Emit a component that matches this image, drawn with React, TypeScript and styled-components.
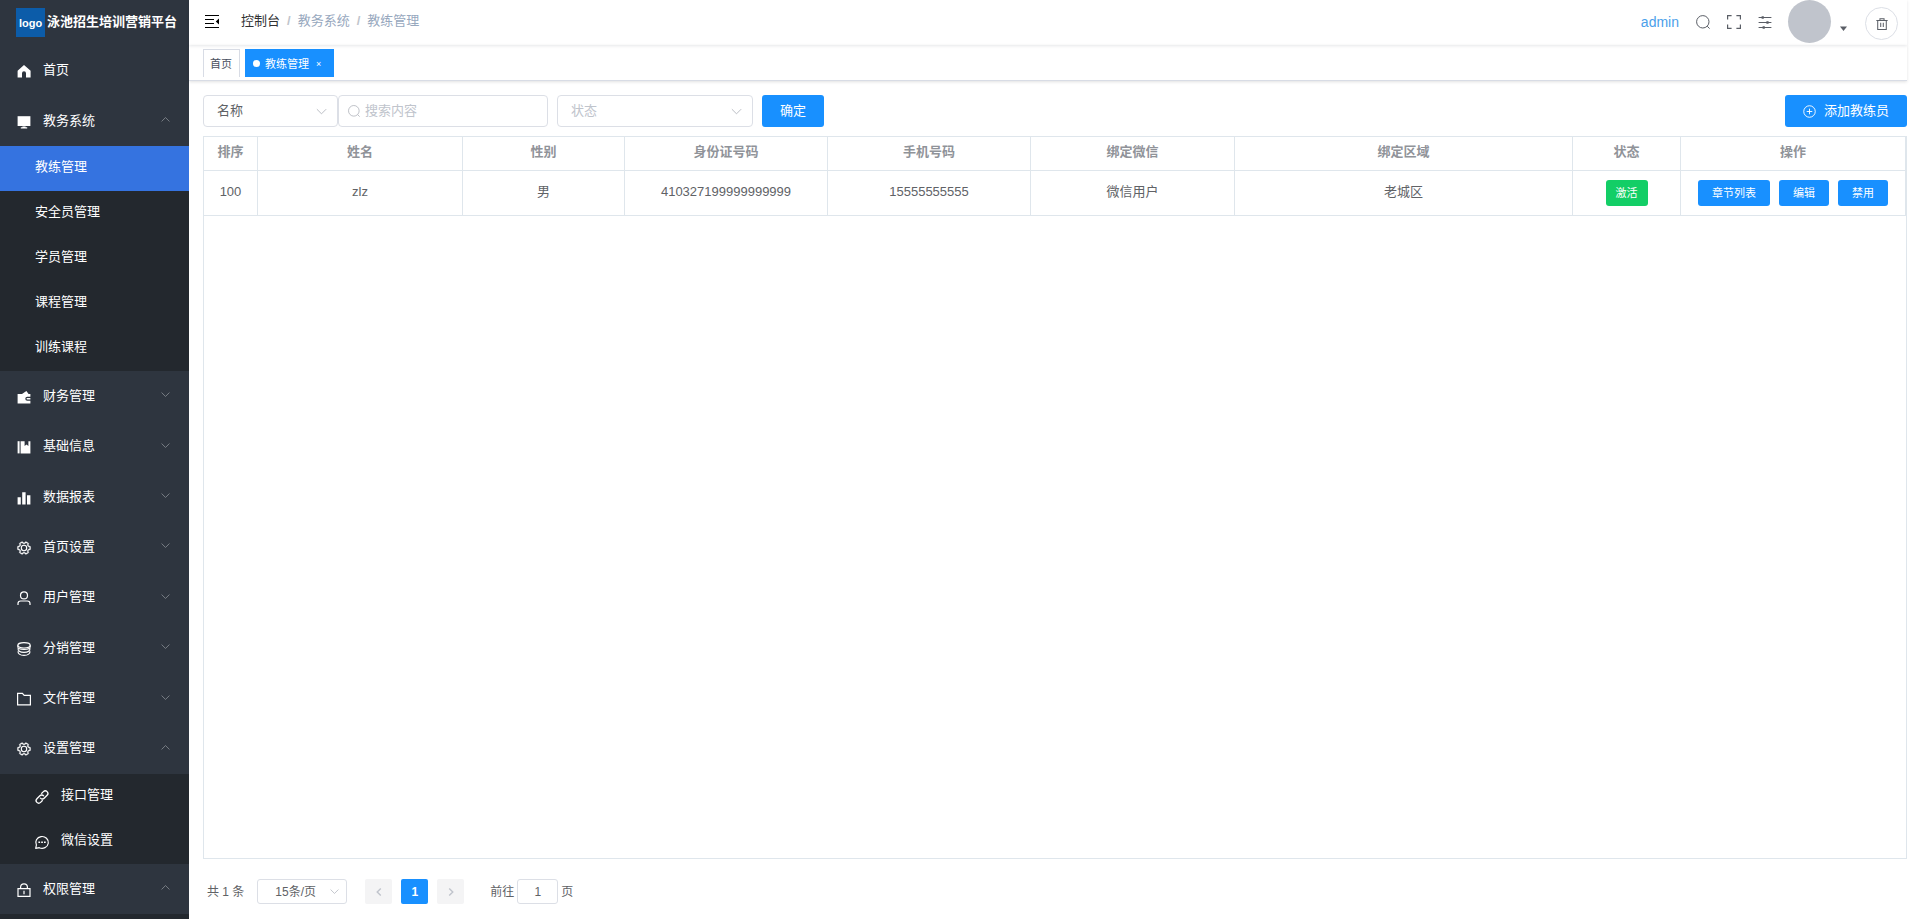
import React from "react";
import styled, { createGlobalStyle, css } from "styled-components";

const GlobalStyle = createGlobalStyle`
  *, *::before, *::after { box-sizing: border-box; }
  body {
    margin: 0;
    background: #fff;
    color: #606266;
    font-family: "Liberation Sans", "Noto Sans CJK SC", sans-serif;
    font-size: 13px;
    line-height: 20px;
  }
  button, input, select { font: inherit; color: inherit; margin: 0; }
  button { cursor: pointer; }
  a { color: inherit; text-decoration: none; }
  ul, ol { list-style: none; margin: 0; padding: 0; }
`;

/* ---------- icons ---------- */

const Svg = styled.svg<{ $size: number }>`
  display: block;
  flex: none;
  width: ${(p) => p.$size}px;
  height: ${(p) => p.$size}px;
  fill: none;
  stroke: currentColor;
  stroke-width: 1;
`;

const shapes = {
  home: <path fill="currentColor" stroke="none" d="M7 1 13.6 6.8V13.4H9V9.2a2 2 0 0 0-4 0v4.2H.6V6.8z" />,
  platform: (
    <g fill="currentColor" stroke="none">
      <path d="M.6 1.200h12.800v9.800H.6z" />
      <path d="M5.400 11.600h3.200v.6h1.600v1.200H3.800v-1.200h1.600z" />
    </g>
  ),
  wallet: (
    <path
      fill="currentColor"
      stroke="none"
      fillRule="evenodd"
      d="M.6 4h4.400l4.400-3 2.200 3h1.800v2.800H10.300a2 2 0 0 0 0 4h3.100v2.600H.6zM10.300 8h3.100v1.600h-3.100a.8.8 0 0 1 0-1.600z"
    />
  ),
  book: (
    <g fill="currentColor" stroke="none">
      <path d="M.6 1.200h2v12.200h-2z" />
      <path d="M3.600 1.200h4v4.800l1.900-1.400 1.900 1.400V1.200h2v12.200H3.600z" />
    </g>
  ),
  bars: (
    <path fill="currentColor" stroke="none" d="M.6 6.200h3.200v7.200H.6zM5.200 1.200h3.400v12.200H5.200zM10 4.200h3.400v9.200H10z" />
  ),
  gear: (
    <g>
      <g transform="translate(-.5 -.5) scale(.01465) rotate(30 512 512)" fill="currentColor" stroke="currentColor" strokeWidth="20">
        <path d="M600.704 64a32 32 0 0 1 30.464 22.208l35.200 109.376c14.784 7.232 28.928 15.360 42.432 24.512l112.384-24.192a32 32 0 0 1 34.432 15.360L944.320 364.800a32 32 0 0 1-4.032 37.504l-77.120 85.120a357.120 357.120 0 0 1 0 49.024l77.120 85.248a32 32 0 0 1 4.032 37.504l-88.704 153.600a32 32 0 0 1-34.432 15.296L708.800 803.904c-13.440 9.088-27.648 17.280-42.368 24.512l-35.264 109.376A32 32 0 0 1 600.704 960H423.296a32 32 0 0 1-30.464-22.208L357.696 828.480a351.616 351.616 0 0 1-42.560-24.640l-112.320 24.256a32 32 0 0 1-34.432-15.360L79.680 659.200a32 32 0 0 1 4.032-37.504l77.120-85.248a357.120 357.120 0 0 1 0-48.896l-77.120-85.248A32 32 0 0 1 79.680 364.800l88.704-153.600a32 32 0 0 1 34.432-15.296l112.320 24.256c13.568-9.152 27.776-17.408 42.560-24.640l35.200-109.312A32 32 0 0 1 423.232 64H600.640zm-23.424 64H446.720l-36.352 113.088-24.512 11.968a294.113 294.113 0 0 0-34.816 20.096l-22.656 15.360-116.224-25.088-65.280 113.152 79.680 88.192-1.920 27.136a293.120 293.120 0 0 0 0 40.192l1.920 27.136-79.808 88.192 65.344 113.152 116.224-25.024 22.656 15.296a294.113 294.113 0 0 0 34.816 20.096l24.512 11.968L446.720 896h130.688l36.480-113.152 24.448-11.904a288.282 288.282 0 0 0 34.752-20.096l22.592-15.296 116.288 25.024 65.280-113.152-79.744-88.192 1.920-27.136a293.120 293.120 0 0 0 0-40.256l-1.920-27.136 79.808-88.128-65.344-113.152-116.288 24.960-22.592-15.232a287.616 287.616 0 0 0-34.752-20.096l-24.448-11.904L577.344 128z" />
      </g>
      <circle cx="7" cy="7" r="2.700" strokeWidth="1.100" />
    </g>
  ),
  user: (
    <g strokeWidth="1.200">
      <circle cx="7" cy="4.400" r="3.500" />
      <path d="M1 14v-1.400a2.600 2.600 0 0 1 2.600-2.600h6.800a2.600 2.600 0 0 1 2.600 2.600V14" />
    </g>
  ),
  coin: (
    <g strokeWidth="1.100">
      <ellipse cx="7" cy="3.300" rx="6.200" ry="2.700" />
      <path d="M.8 3.300v1.400c0 1.500 2.800 2.700 6.200 2.700s6.200-1.200 6.200-2.700V3.300" />
      <path d="M1.200 6.200c-.8 2.400 1.800 4.200 5.800 4.200s6.600-1.800 5.800-4.200" />
      <path d="M1.200 9c-.8 2.400 1.800 4.400 5.800 4.400s6.600-2 5.800-4.400" />
    </g>
  ),
  folder: <path strokeWidth="1.200" d="M.6 1.400h4.800l1.800 2h6.200v9.400H.6z" />,
  link: (
    <g strokeWidth="1.300" transform="rotate(-45 7 7)">
      <path d="M5.200 9.800H2.200a2.600 2.600 0 0 1 0-5.200h4.200a2.600 2.600 0 0 1 2.500 3.200" />
      <path d="M8.800 4.200h3a2.600 2.600 0 0 1 0 5.200H7.600a2.600 2.600 0 0 1-2.500-3.200" />
    </g>
  ),
  chat: (
    <g>
      <path strokeWidth="1.200" d="M.7 13.400 1.400 10A6.300 5.900 0 1 1 4.300 12.700z" strokeLinejoin="round" />
      <path fill="currentColor" stroke="none" d="M3.400 6.500h1.700v1.500H3.400zM6.200 6.500h1.700v1.500H6.200zM9 6.500h1.700v1.500H9z" />
    </g>
  ),
  lock: (
    <g strokeWidth="1.200">
      <path d="M1 5.600h12v7.800H1zM3.600 5.600V4.200a3.400 3.400 0 0 1 6.800 0v1.400M7 7.800v3.400" />
    </g>
  ),
  up: <path d="M2 9.500 7 4.500l5 5" />,
  down: <path d="m2 4.500 5 5 5-5" />,
  left: <path strokeWidth="2" d="M9.500 2 4.500 7l5 5" />,
  right: <path strokeWidth="2" d="m4.500 2 5 5-5 5" />,
  search: (
    <g>
      <circle cx="6.800" cy="6.800" r="6.200" />
      <path d="m11.200 11.200 2.400 2.400" />
    </g>
  ),
  fullscreen: <path strokeWidth="1.200" d="M.6 4.600V.6h4M9.400.6h4v4M13.400 9.400v4h-4M4.600 13.400h-4v-4" />,
  sliders: (
    <g>
      <path d="M.6 2.500h12.800M.6 7.500h12.800M.6 12.500h12.800" />
      <path strokeWidth="2.600" d="M3.600 2.500h2.200M8.400 7.500h2.200M4.600 12.500h2.200" />
    </g>
  ),
  fold: (
    <g>
      <path d="M0 .5h14M0 4.500h9M0 8.500h9M0 12.500h14" />
      <path fill="currentColor" stroke="none" d="M14 3.500v6L10.800 6.500z" />
    </g>
  ),
  caret: <path fill="currentColor" stroke="none" d="M0 3h14L7 12z" />,
  trash: <path strokeWidth="1.200" d="M.4 3h13.200M4.600 3V1h4.800v2M2 3v10.400h10V3M5.500 5.600v5M8.500 5.600v5" />,
  plus: (
    <g>
      <circle cx="7" cy="7" r="6.200" />
      <path d="M7 4v6M4 7h6" />
    </g>
  ),
};

type IconName = keyof typeof shapes;

const Icon = ({ name, size = 14 }: { name: IconName; size?: number }) => (
  <Svg viewBox="0 0 14 14" $size={size} aria-hidden="true" overflow="visible">
    {shapes[name]}
  </Svg>
);

/* ---------- shell ---------- */

const Shell = styled.div`
  display: flex;
  min-height: 100vh;
`;

const Sidebar = styled.aside`
  display: flex;
  flex-direction: column;
  flex: none;
  width: 189px;
  height: 100vh;
  overflow: hidden;
  background: #2e353f;
  color: #fff;
`;

const Brand = styled.a`
  display: flex;
  flex: none;
  align-items: center;
  gap: 2px;
  height: 45px;
  padding-left: 16px;
  font-weight: bold;
  white-space: nowrap;
`;

const Logo = styled.span`
  display: grid;
  place-items: center;
  width: 29px;
  height: 29px;
  background: #0c5ca9;
  font-size: 11px;
`;

const Label = styled.span`
  flex: 1;
  padding-bottom: 2px;
`;

const SubLabel = styled(Label)`
  padding-bottom: 4px;
`;

const Menu = styled.nav`
  display: flex;
  flex: 1;
  flex-direction: column;
  min-height: 0;
`;

const MenuRow = styled.button`
  display: flex;
  flex: 1 0 50px;
  align-items: center;
  gap: 12px;
  max-height: 51px;
  padding: 2px 18px 0 17px;
  border: 0;
  background: none;
  text-align: left;
`;

const Arrow = styled.span`
  padding-bottom: 4px;
  color: #8b9097;
`;

const SubMenu = styled.ul`
  flex: none;
  background: #23282e;
`;

const SubLink = styled.a<{ $active?: boolean }>`
  display: flex;
  align-items: center;
  gap: 12px;
  height: 45px;
  padding: 2px 35px 0;
  background: ${(p) => (p.$active ? "#3573e0" : "transparent")};
`;

const ClosedEnd = styled.div`
  flex: none;
  height: 5px;
  background: #23282e;
`;

const Main = styled.main`
  display: flex;
  flex: 1;
  flex-direction: column;
  min-width: 0;
  height: 100vh;
  padding-right: 13px;
`;

const TopBar = styled.header`
  display: flex;
  flex: none;
  align-items: center;
  justify-content: space-between;
  height: 45px;
  padding: 0 9px 2px 16px;
  box-shadow: 0 1px 3px rgba(0, 21, 41, 0.1);
`;

const Group = styled.div<{ $gap: number }>`
  display: flex;
  align-items: center;
  gap: ${(p) => p.$gap}px;
`;

const IconButton = styled.button`
  display: grid;
  place-items: center;
  padding: 0;
  border: 0;
  background: none;
  color: #5a5e66;
`;

const FoldButton = styled(IconButton)`
  color: #000;
`;

const Crumbs = styled.ol`
  display: flex;
  padding-bottom: 2px;
  color: #97a8be;
`;

const Crumb = styled.li`
  & + &::before {
    content: "/";
    margin: 0 7px;
    color: #c0c4cc;
    font-weight: bold;
  }
  &:first-child { color: #303133; }
`;

const UserName = styled.a`
  color: #4ba0ea;
  font-size: 14px;
`;

const AvatarButton = styled.button`
  display: flex;
  align-items: center;
  gap: 9px;
  padding: 0;
  border: 0;
  background: none;
  color: #5a5e66;
`;

const Avatar = styled.span`
  width: 43px;
  height: 43px;
  border-radius: 50%;
  background: #c0c4cc;
`;

const CaretBox = styled.span`
  padding-top: 14px;
`;

const RoundButton = styled(IconButton)`
  width: 33px;
  height: 33px;
  border: 1px solid #dcdfe6;
  border-radius: 50%;
`;

const RoundSlot = styled.div`
  padding: 4px 0 0 2px;
`;

const UserTools = styled.div`
  display: flex;
  align-items: center;
  gap: 16px;
  height: 43px;
`;

const TagBar = styled.div`
  display: flex;
  flex: none;
  gap: 5px;
  height: 36px;
  padding: 4px 14px 3px;
  border-bottom: 1px solid #d8dce5;
  box-shadow: 0 1px 3px rgba(0, 0, 0, 0.12);
`;

const Tag = styled.a<{ $active?: boolean }>`
  display: flex;
  align-items: center;
  gap: 5px;
  padding: 0 7px 0 6px;
  border: 1px solid #d8dce5;
  border-bottom: 0;
  color: #495060;
  font-size: 11px;
  ${(p) =>
    p.$active &&
    css`
      padding: 0 12px 0 7px;
      border-color: #1890ff;
      background: #1890ff;
      color: #fff;
    `}
`;

const Dot = styled.span`
  width: 7px;
  height: 7px;
  border-radius: 50%;
  background: #fff;
`;

const Close = styled.span`
  padding-left: 2px;
  font-size: 9px;
`;

/* ---------- page ---------- */

const Page = styled.section`
  display: flex;
  flex: 1;
  flex-direction: column;
  min-height: 0;
  padding: 14px 0 15px 14px;
`;

const Filters = styled.form`
  display: flex;
  margin-bottom: 9px;
`;

const Field = styled.label<{ $width: number; $gap?: boolean }>`
  display: flex;
  align-items: center;
  gap: 5px;
  width: ${(p) => p.$width}px;
  height: 32px;
  margin-left: ${(p) => (p.$gap ? 9 : 0)}px;
  padding: 0 9px;
  border: 1px solid #dcdfe6;
  border-radius: 4px;
  color: #b4b8bf;
`;

const Select = styled.select<{ $muted?: boolean }>`
  flex: 1;
  min-width: 0;
  height: 100%;
  padding: 0 4px;
  border: 0;
  outline: 0;
  appearance: none;
  background: none;
  color: ${(p) => (p.$muted ? "#c0c4cc" : "#606266")};
`;

const Input = styled.input`
  flex: 1;
  min-width: 0;
  padding: 0;
  border: 0;
  outline: 0;
  background: none;
  color: #606266;
  &::placeholder { color: #c0c4cc; opacity: 1; }
`;

const Primary = styled.button<{ $push?: boolean }>`
  display: flex;
  align-items: center;
  gap: 8px;
  height: 32px;
  margin-left: ${(p) => (p.$push ? "auto" : "9px")};
  padding: 0 18px;
  border: 0;
  border-radius: 3px;
  background: #1890ff;
  color: #fff;
`;

const TableBox = styled.div`
  flex: 1;
  min-height: 0;
  overflow: auto;
  border: 1px solid #dfe6ec;
`;

const Table = styled.table`
  width: 100%;
  border-collapse: separate;
  border-spacing: 0;
  table-layout: fixed;
  text-align: center;
  th, td {
    padding: 0;
    border-right: 1px solid #dfe6ec;
    border-bottom: 1px solid #dfe6ec;
  }
  th { height: 34px; padding-bottom: 3px; color: #909399; }
  td { height: 45px; }
`;

const Value = styled.span`
  display: block;
  padding-bottom: 2px;
`;

const Col = styled.col<{ $width?: number }>`
  width: ${(p) => (p.$width ? `${p.$width}px` : "auto")};
`;

const Small = styled.button<{ $green?: boolean }>`
  height: 26px;
  padding: 0 ${(p) => (p.$green ? 10 : 14)}px;
  border: 0;
  border-radius: 3px;
  background: ${(p) => (p.$green ? "#13ce66" : "#1890ff")};
  color: #fff;
  font-size: 11px;
`;

const Actions = styled.div`
  display: flex;
  justify-content: center;
  gap: 9px;
`;

const Pager = styled.nav`
  display: flex;
  flex: none;
  align-items: center;
  margin-top: 20px;
  padding-left: 4px;
  font-size: 12px;
`;

const SizeBox = styled.label`
  display: flex;
  align-items: center;
  width: 90px;
  height: 25px;
  margin: 0 18px 0 13px;
  padding: 0 6px 0 13px;
  border: 1px solid #dcdfe6;
  border-radius: 3px;
  color: #b4b8bf;
`;

const Pages = styled.div`
  display: flex;
  gap: 9px;
  margin-right: 26px;
`;

const PageButton = styled.button<{ $current?: boolean }>`
  display: grid;
  place-items: center;
  width: 27px;
  height: 25px;
  padding: 0;
  border: 0;
  border-radius: 2px;
  background: ${(p) => (p.$current ? "#1890ff" : "#f4f4f5")};
  color: ${(p) => (p.$current ? "#fff" : "#c0c4cc")};
  font-weight: bold;
`;

const Jump = styled.label`
  display: flex;
  align-items: center;
  gap: 3px;
`;

const JumpInput = styled.input`
  width: 41px;
  height: 25px;
  padding: 0;
  border: 1px solid #dcdfe6;
  border-radius: 3px;
  text-align: center;
`;

/* ---------- data ---------- */

type Entry = {
  label: string;
  icon: IconName;
  open?: boolean;
  leaf?: boolean;
  items?: { label: string; icon?: IconName; active?: boolean }[];
};

const menu: Entry[] = [
  { label: "首页", icon: "home", leaf: true },
  {
    label: "教务系统",
    icon: "platform",
    open: true,
    items: [
      { label: "教练管理", active: true },
      { label: "安全员管理" },
      { label: "学员管理" },
      { label: "课程管理" },
      { label: "训练课程" },
    ],
  },
  { label: "财务管理", icon: "wallet" },
  { label: "基础信息", icon: "book" },
  { label: "数据报表", icon: "bars" },
  { label: "首页设置", icon: "gear" },
  { label: "用户管理", icon: "user" },
  { label: "分销管理", icon: "coin" },
  { label: "文件管理", icon: "folder" },
  {
    label: "设置管理",
    icon: "gear",
    open: true,
    items: [
      { label: "接口管理", icon: "link" },
      { label: "微信设置", icon: "chat" },
    ],
  },
  { label: "权限管理", icon: "lock", open: true },
];

const columns: { title: string; width?: number }[] = [
  { title: "排序", width: 54 },
  { title: "姓名" },
  { title: "性别", width: 162 },
  { title: "身份证号码", width: 203 },
  { title: "手机号码", width: 203 },
  { title: "绑定微信", width: 204 },
  { title: "绑定区域", width: 338 },
  { title: "状态", width: 108 },
  { title: "操作", width: 225 },
];

const coach = ["100", "zlz", "男", "410327199999999999", "15555555555", "微信用户", "老城区"];

export default function App() {
  return (
    <Shell>
      <GlobalStyle />
      <Sidebar>
        <Brand href="#">
          <Logo>logo</Logo>
          <Label>泳池招生培训营销平台</Label>
        </Brand>
        <Menu>
          {menu.map((entry) => (
            <React.Fragment key={entry.label}>
              <MenuRow type="button">
                <Icon name={entry.icon} />
                <Label>{entry.label}</Label>
                {!entry.leaf && (
                  <Arrow>
                    <Icon name={entry.open ? "up" : "down"} size={11} />
                  </Arrow>
                )}
              </MenuRow>
              {entry.items && (
                <SubMenu>
                  {entry.items.map((item) => (
                    <li key={item.label}>
                      <SubLink href="#" $active={item.active}>
                        {item.icon && <Icon name={item.icon} />}
                        <SubLabel>{item.label}</SubLabel>
                      </SubLink>
                    </li>
                  ))}
                </SubMenu>
              )}
            </React.Fragment>
          ))}
          <ClosedEnd />
        </Menu>
      </Sidebar>

      <Main>
        <TopBar>
          <Group $gap={22}>
            <FoldButton type="button" aria-label="折叠菜单">
              <Icon name="fold" />
            </FoldButton>
            <Crumbs>
              <Crumb><a href="#">控制台</a></Crumb>
              <Crumb>教务系统</Crumb>
              <Crumb>教练管理</Crumb>
            </Crumbs>
          </Group>
          <UserTools>
            <Group $gap={17}>
              <UserName href="#">admin</UserName>
              <IconButton type="button" aria-label="搜索"><Icon name="search" /></IconButton>
              <IconButton type="button" aria-label="全屏"><Icon name="fullscreen" /></IconButton>
              <IconButton type="button" aria-label="布局"><Icon name="sliders" /></IconButton>
            </Group>
            <AvatarButton type="button" aria-label="用户菜单">
              <Avatar />
              <CaretBox><Icon name="caret" size={7} /></CaretBox>
            </AvatarButton>
            <RoundSlot>
              <RoundButton type="button" aria-label="清除缓存"><Icon name="trash" size={12} /></RoundButton>
            </RoundSlot>
          </UserTools>
        </TopBar>

        <TagBar>
          <Tag href="#">首页</Tag>
          <Tag href="#" $active>
            <Dot />
            教练管理
            <Close>×</Close>
          </Tag>
        </TagBar>

        <Page>
          <Filters>
            <Field $width={135}>
              <Select aria-label="搜索字段"><option>名称</option></Select>
              <Icon name="down" size={13} />
            </Field>
            <Field $width={210}>
              <Icon name="search" size={12} />
              <Input placeholder="搜索内容" aria-label="搜索内容" />
            </Field>
            <Field $width={196} $gap>
              <Select $muted aria-label="状态"><option>状态</option></Select>
              <Icon name="down" size={13} />
            </Field>
            <Primary type="button">确定</Primary>
            <Primary type="button" $push>
              <Icon name="plus" size={13} />
              添加教练员
            </Primary>
          </Filters>

          <TableBox>
            <Table>
              <colgroup>
                {columns.map((c) => <Col key={c.title} $width={c.width} />)}
              </colgroup>
              <thead>
                <tr>{columns.map((c) => <th key={c.title} scope="col">{c.title}</th>)}</tr>
              </thead>
              <tbody>
                <tr>
                  {coach.map((value) => <td key={value}><Value>{value}</Value></td>)}
                  <td><Small type="button" $green>激活</Small></td>
                  <td>
                    <Actions>
                      <Small type="button">章节列表</Small>
                      <Small type="button">编辑</Small>
                      <Small type="button">禁用</Small>
                    </Actions>
                  </td>
                </tr>
              </tbody>
            </Table>
          </TableBox>

          <Pager aria-label="分页">
            <span>共 1 条</span>
            <SizeBox>
              <Select aria-label="每页条数"><option>15条/页</option></Select>
              <Icon name="down" size={11} />
            </SizeBox>
            <Pages>
              <PageButton type="button" aria-label="上一页" disabled><Icon name="left" size={10} /></PageButton>
              <PageButton type="button" $current>1</PageButton>
              <PageButton type="button" aria-label="下一页" disabled><Icon name="right" size={10} /></PageButton>
            </Pages>
            <Jump>
              前往
              <JumpInput defaultValue="1" />
              页
            </Jump>
          </Pager>
        </Page>
      </Main>
    </Shell>
  );
}
